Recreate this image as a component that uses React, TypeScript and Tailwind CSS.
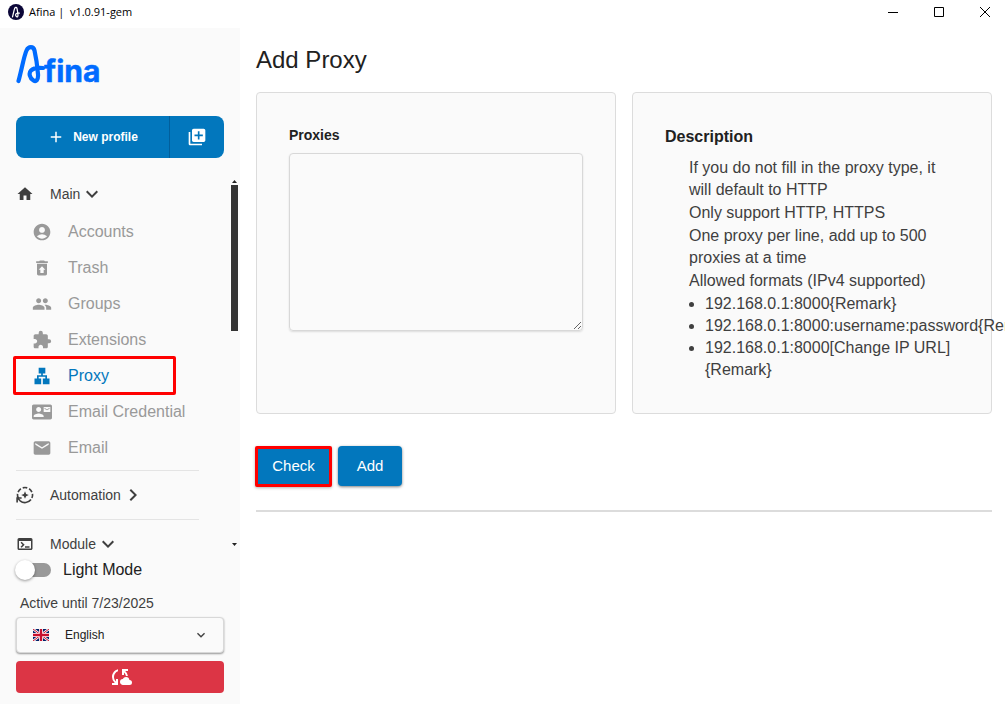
import { useState } from "react"
import {
  MdAccountCircle,
  MdAdd,
  MdCloudSync,
  MdContactMail,
  MdEmail,
  MdExpandMore,
  MdExtension,
  MdHome,
  MdKeyboardArrowDown,
  MdKeyboardArrowRight,
  MdLan,
  MdLibraryAdd,
  MdPeople,
  MdRestoreFromTrash,
  MdTerminal,
} from "react-icons/md"

const mainItems = [
  { icon: MdAccountCircle, title: "Accounts" },
  { icon: MdRestoreFromTrash, title: "Trash" },
  { icon: MdPeople, title: "Groups" },
  { icon: MdExtension, title: "Extensions" },
  { icon: MdLan, title: "Proxy" },
  { icon: MdContactMail, title: "Email Credential" },
  { icon: MdEmail, title: "Email" },
]

const notes = [
  "If you do not fill in the proxy type, it will default to HTTP",
  "Only support HTTP, HTTPS",
  "One proxy per line, add up to 500 proxies at a time",
  "Allowed formats (IPv4 supported)",
]

const formats = [
  "192.168.0.1:8000{Remark}",
  "192.168.0.1:8000:username:password{Remark}",
  "192.168.0.1:8000[Change IP URL]{Remark}",
]

const letterA =
  "M2.500 37C6 24 8 12 10.500 6.500C12.500 2 17.500 2 18.500 6.500C20 13 21.500 24 22 30C22.500 36 20 38 17.500 36.500C13.500 34 12.500 29 15 26.500C17.500 24 22 23.500 27 24"

function Logo() {
  return (
    <svg width="88" height="48" viewBox="0 0 88 48" role="img" aria-label="Afina">
      <path d={letterA} fill="none" stroke="#006bff" strokeWidth="4.200" strokeLinecap="round" strokeLinejoin="round" />
      <text
        x="28"
        y="38"
        className="font-['Inter'] text-[30px] font-bold"
        fill="#006bff"
        stroke="#006bff"
        strokeWidth="0.5"
        strokeLinejoin="round"
      >
        fina
      </text>
    </svg>
  )
}

function AppBadge() {
  return (
    <svg width="16" height="16" viewBox="0 0 16 16" aria-hidden="true">
      <circle cx="8" cy="8" r="8" fill="#0b0638" />
      <g transform="translate(3.800 2.500) scale(.28)">
        <path d={letterA} fill="none" stroke="#fff" strokeWidth="4.500" strokeLinecap="round" />
      </g>
    </svg>
  )
}

function AutomationIcon() {
  return (
    <svg width="18" height="18" viewBox="0 0 24 24" fill="none" stroke="currentColor" strokeWidth="2.2" aria-hidden="true">
      <path d="M9 2.500a10 10 0 0 1 6 0M17.500 3.700a10 10 0 0 1 3.700 4.500M6.500 3.700a10 10 0 0 0-3.700 4.500M2 10.500a10 10 0 0 0 1.500 6.500M22 10.500a10 10 0 0 1-.8 5.500M20 18a10 10 0 0 1-14.500 1.700L3 17" />
      <path d="M1.500 22v-6h6" />
      <path d="m12 7 1.500 3.500L17 12l-3.500 1.500L12 17l-1.500-3.500L7 12l3.500-1.500z" fill="currentColor" stroke="none" />
    </svg>
  )
}

function Flag() {
  return (
    <svg width="16" height="12" viewBox="0 0 16 12" aria-hidden="true">
      <path fill="#012169" d="M0 0h16v12H0z" />
      <path stroke="#fff" strokeWidth="2.500" d="m0 0 16 12M16 0 0 12" />
      <path stroke="#c8102e" strokeWidth="1" d="m0 0 16 12M16 0 0 12" />
      <path stroke="#fff" strokeWidth="4" d="M8 0v12M0 6h16" />
      <path stroke="#c8102e" strokeWidth="2.400" d="M8 0v12M0 6h16" />
    </svg>
  )
}

function TitleBar() {
  return (
    <header className="flex h-7 shrink-0 items-center justify-between overflow-hidden pb-1 pl-2 text-black">
      <div className="flex items-center gap-[5px]">
        <AppBadge />
        <span className="whitespace-pre font-['Open_Sans',sans-serif] text-[11px]">Afina |  v1.0.91-gem</span>
      </div>
      <div className="-mr-[3px] flex">
        <button type="button" aria-label="Minimize" className="flex h-6 w-[46px] items-center justify-center">
          <svg width="10" height="10" viewBox="0 0 10 10" stroke="currentColor"><path d="M0 5.500h10" /></svg>
        </button>
        <button type="button" aria-label="Maximize" className="flex h-6 w-[46px] items-center justify-center">
          <svg width="10" height="10" viewBox="0 0 10 10" fill="none" stroke="currentColor"><path d="M.5.5h9v9h-9z" /></svg>
        </button>
        <button type="button" aria-label="Close" className="flex h-6 w-[46px] items-center justify-center">
          <svg width="10" height="10" viewBox="0 0 10 10" stroke="currentColor"><path d="m0 0 10 10M10 0 0 10" /></svg>
        </button>
      </div>
    </header>
  )
}

function Sidebar() {
  const [lightMode, setLightMode] = useState(false)

  return (
    <aside className="flex w-60 shrink-0 flex-col bg-[#fafafa] pt-4 pb-[11px] text-[#3f3f3f]">
      <div className="px-4">
        <Logo />
        <div className="mt-6 flex h-[42px] overflow-hidden rounded-lg bg-[#0277bd] text-white">
          <button type="button" className="flex flex-1 items-center justify-center gap-2 border-r border-[#015f9c] text-xs font-bold">
            <MdAdd className="size-[18px]" aria-hidden="true" />
            New profile
          </button>
          <button type="button" aria-label="Add several profiles" className="flex w-[54px] items-center justify-center">
            <MdLibraryAdd className="size-5" />
          </button>
        </div>
      </div>

      <div className="mt-[18px] flex min-h-0 flex-1 overflow-hidden">
        <nav className="flex-1 pr-8 pl-4 text-sm">
          <button type="button" className="mb-[2px] flex h-9 items-center" aria-expanded="true">
            <MdHome className="mr-4 size-[18px]" aria-hidden="true" />
            Main
            <MdKeyboardArrowDown className="size-6" aria-hidden="true" />
          </button>
          <ul className="text-base text-[#999]">
            {mainItems.map((item) => {
              const active = item.title === "Proxy"
              return (
                <li key={item.title} className="relative">
                  <a href="#" className={`flex h-9 items-center gap-4 pl-4 ${active ? "text-[#0277bd]" : ""}`}>
                    <item.icon className="size-5" aria-hidden="true" />
                    {item.title}
                  </a>
                  {active && (
                    <span className="pointer-events-none absolute -top-[2px] -left-[3px] h-[39px] w-[163px] rounded-xs border-3 border-[#f00]" />
                  )}
                </li>
              )
            })}
          </ul>
          <hr className="mt-1 border-[#e4e4e4]" />
          <button type="button" className="flex h-12 items-center" aria-expanded="false">
            <span className="mr-4"><AutomationIcon /></span>
            Automation
            <MdKeyboardArrowRight className="size-6" aria-hidden="true" />
          </button>
          <hr className="border-[#e4e4e4]" />
          <button type="button" className="flex h-12 items-center" aria-expanded="true">
            <MdTerminal className="mr-4 size-[18px]" aria-hidden="true" />
            Module
            <MdKeyboardArrowDown className="size-6" aria-hidden="true" />
          </button>
        </nav>
        {/* scroll bar */}
        <div className="mr-[2px] flex w-[7px] flex-col items-center pt-1 pb-[6px]" aria-hidden="true">
          <svg width="5" height="3" viewBox="0 0 5 3"><path d="M2.500 0 5 3H0z" fill="#222" /></svg>
          <div className="mt-[2px] h-[146px] w-full bg-[#333]" />
          <svg className="mt-auto" width="5" height="3" viewBox="0 0 5 3"><path d="M0 0h5L2.500 3z" fill="#222" /></svg>
        </div>
      </div>

      <div className="px-4">
        <label className="flex h-9 items-center gap-3 text-base text-[#212121]">
          <input
            type="checkbox"
            role="switch"
            className="peer sr-only"
            checked={lightMode}
            onChange={(e) => setLightMode(e.target.checked)}
          />
          <span className={`flex h-[14px] w-[35px] items-center rounded-full bg-[#999] ${lightMode ? "justify-end" : ""}`}>
            <span className="-ml-px size-5 shrink-0 rounded-full bg-white shadow-[0_1px_3px_rgba(0,0,0,0.4)]" />
          </span>
          Light Mode
        </label>
        <p className="pt-px pl-1 text-sm leading-7">Active until 7/23/2025</p>
        <div className="relative">
          <select
            aria-label="Language"
            defaultValue="en"
            className="block h-9 w-full appearance-none rounded-sm border border-[#d8d8d8] bg-[#fafafa] pl-12 text-xs text-[#212121] shadow-[0_1px_2px_rgba(0,0,0,0.4)]"
          >
            <option value="en">English</option>
          </select>
          <span className="pointer-events-none absolute inset-y-0 left-[17px] flex items-center"><Flag /></span>
          <span className="pointer-events-none absolute inset-y-0 right-[15px] flex items-center">
            <MdExpandMore className="size-4" aria-hidden="true" />
          </span>
        </div>
        <button
          type="button"
          aria-label="Cloud sync"
          className="mt-2 flex h-8 w-full items-center justify-center rounded-sm bg-[#dc3545] text-white"
        >
          <MdCloudSync className="size-6" />
        </button>
      </div>
    </aside>
  )
}

export default function App() {
  const [proxies, setProxies] = useState("")

  return (
    <div className="flex h-screen flex-col overflow-hidden bg-white font-['Liberation_Sans',Arial,sans-serif]">
      <TitleBar />
      <div className="flex min-h-0 flex-1">
        <Sidebar />
        <main className="min-w-0 flex-1 overflow-hidden pt-4 pr-[13px] pl-4 text-[#212121]">
          <h1 className="text-2xl">Add Proxy</h1>
          <div className="mt-4 grid grid-cols-2 gap-4">
            <section className="min-w-0 rounded-sm border border-[#dcdcdc] bg-[#fafafa] p-8">
              <label htmlFor="proxies" className="block text-sm font-bold">Proxies</label>
              <textarea
                id="proxies"
                value={proxies}
                onChange={(e) => setProxies(e.target.value)}
                className="mt-2 block h-[178px] w-full resize rounded-sm border border-[#d8d8d8] p-2 shadow-[0_1px_2px_rgba(0,0,0,0.12)]"
              />
            </section>
            <section className="min-w-0 rounded-sm border border-[#dcdcdc] bg-[#fafafa] p-8">
              <h2 className="text-base leading-6 font-bold">Description</h2>
              <div className="mt-2 space-y-px pl-6 text-base leading-[22px] text-[#3f3f3f]">
                {notes.map((note) => (
                  <p key={note}>{note}</p>
                ))}
                <ul className="list-disc pl-4">
                  {formats.map((format) => (
                    <li key={format}>{format}</li>
                  ))}
                </ul>
              </div>
            </section>
          </div>
          <div className="mt-8 flex items-start gap-[6px] text-[15px] text-white">
            <button type="button" className="-ml-px h-[41px] w-[77px] rounded-xs border-3 border-[#f00] bg-[#0277bd] shadow-[0_1px_3px_rgba(0,0,0,0.3)]">
              Check
            </button>
            <button type="button" className="h-10 w-16 rounded-sm bg-[#0277bd] shadow-[0_1px_3px_rgba(0,0,0,0.5)]">
              Add
            </button>
          </div>
          <hr className="mt-[23px] border-t-2 border-[#dcdcdc]" />
        </main>
      </div>
    </div>
  )
}
